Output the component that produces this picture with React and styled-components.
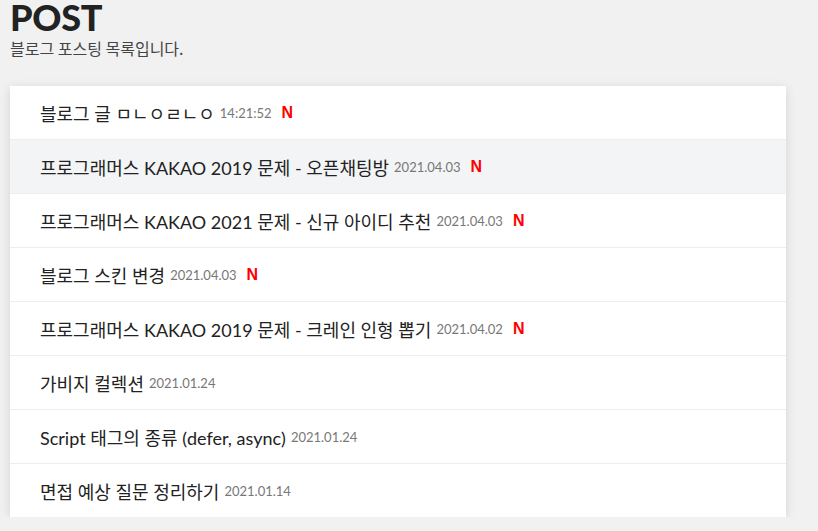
import React from "react";
import styled, { createGlobalStyle } from "styled-components";

const Global = createGlobalStyle`
  html, body { margin: 0; padding: 0; background: #f1f1f1; }
  body { font-family: Lato, "Noto Sans CJK KR", sans-serif; color: #222; }
`;

const Page = styled.div`
  padding: 0 10px;
  width: 776px;
`;

const Title = styled.h1`
  margin: 0;
  font-family: Lato, "Noto Sans CJK KR", sans-serif;
  font-weight: 900;
  font-size: 36px;
  line-height: 34px;
  color: #222;
  letter-spacing: -0.3px;
`;

const Subtitle = styled.p`
  margin: 4px 0 0;
  font-size: 16px;
  line-height: 20px;
  color: #444;
  font-family: "Noto Sans CJK KR", sans-serif;
  font-weight: 400;
`;

const Card = styled.ul`
  list-style: none;
  margin: 28px 0 0;
  padding: 0;
  background: #fff;
  box-shadow: 0 2px 10px rgba(0, 0, 0, 0.12);
`;

const Row = styled.li`
  display: flex;
  align-items: center;
  height: 53px;
  padding: 0 30px;
  background: ${(p) => (p.$active ? "#f3f4f6" : "#fff")};
  border-top: ${(p) => (p.$first ? "none" : "1px solid #eeeeee")};
`;

const PostTitle = styled.span`
  font-family: Lato, "Noto Sans CJK KR", sans-serif;
  font-size: 18px;
  color: #222;
`;

const PostDate = styled.span`
  font-family: Lato, sans-serif;
  font-size: 13px;
  color: #777;
  margin-left: 5px;
`;

const NewBadge = styled.span`
  font-family: "Liberation Sans", Arial, sans-serif;
  font-weight: 700;
  font-size: 16px;
  color: #ff0000;
  margin-left: 10px;
`;

const posts = [
  { title: "블로그 글 ㅁㄴㅇㄹㄴㅇ", date: "14:21:52", isNew: true },
  { title: "프로그래머스 KAKAO 2019 문제 - 오픈채팅방", date: "2021.04.03", isNew: true, active: true },
  { title: "프로그래머스 KAKAO 2021 문제 - 신규 아이디 추천", date: "2021.04.03", isNew: true },
  { title: "블로그 스킨 변경", date: "2021.04.03", isNew: true },
  { title: "프로그래머스 KAKAO 2019 문제 - 크레인 인형 뽑기", date: "2021.04.02", isNew: true },
  { title: "가비지 컬렉션", date: "2021.01.24" },
  { title: "Script 태그의 종류 (defer, async)", date: "2021.01.24" },
  { title: "면접 예상 질문 정리하기", date: "2021.01.14" },
];

export default function App() {
  return (
    <Page>
      <Global />
      <Title>POST</Title>
      <Subtitle>블로그 포스팅 목록입니다.</Subtitle>
      <Card>
        {posts.map((p, i) => (
          <Row key={i} $first={i === 0} $active={p.active}>
            <PostTitle>{p.title}</PostTitle>
            <PostDate>{p.date}</PostDate>
            {p.isNew && <NewBadge>N</NewBadge>}
          </Row>
        ))}
      </Card>
    </Page>
  );
}
